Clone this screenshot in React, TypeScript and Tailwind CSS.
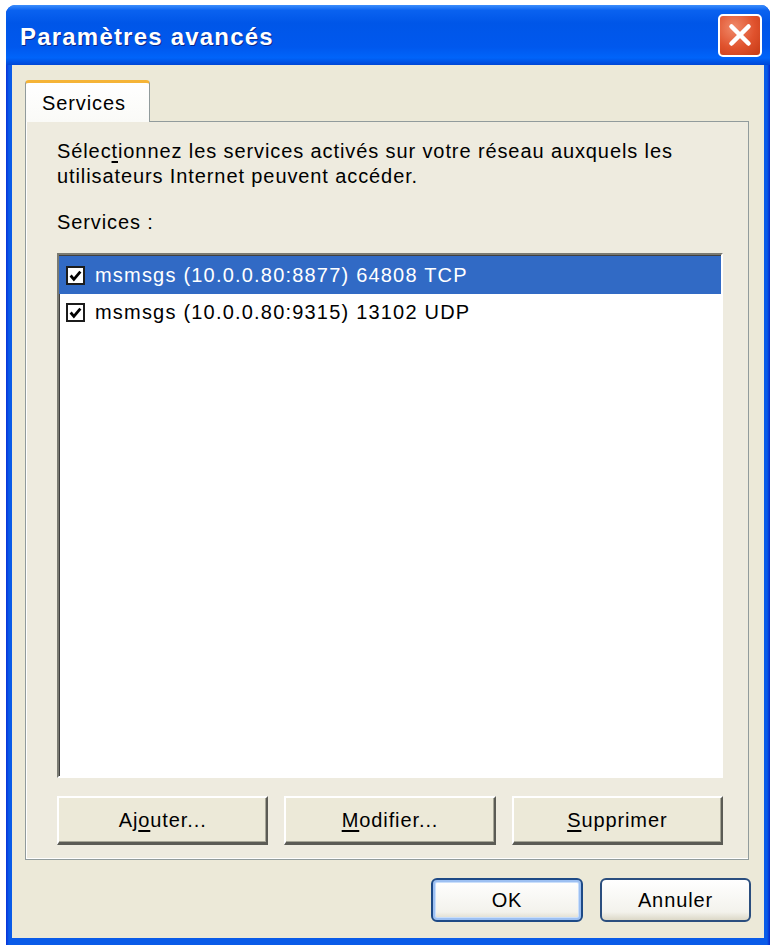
import { X } from "lucide-react"

const font = { fontFamily: '"Liberation Sans", Arial, sans-serif' }

function Check() {
  return (
    <div className="flex h-[19px] w-[19px] shrink-0 items-center justify-center border-2 border-[#1c1c1c] bg-white">
      <svg width="13" height="13" viewBox="0 0 12 12">
        <path d="M1.5 6 L4.5 9.5 L10.5 2.5" fill="none" stroke="#000" strokeWidth="2.6" />
      </svg>
    </div>
  )
}

function ClassicButton({ pre, mn, post }: { pre: string; mn: string; post: string }) {
  return (
    <button className="flex h-[49px] flex-1 items-center justify-center border-t-2 border-l-2 border-r-2 border-b-[3px] border-t-white border-l-white border-r-[#5b5b55] border-b-[#5b5b55] bg-[#ECE9D8] text-[20px] tracking-[0.9px] text-black shadow-[inset_-1px_-1px_0_#a7a697]">
      <span>
        {pre}
        <span className="underline underline-offset-[3px]">{mn}</span>
        {post}
      </span>
    </button>
  )
}

export default function App() {
  return (
    <div className="h-[951px] w-[774px] bg-white pl-[6px] pt-[5px] tracking-[0.9px]" style={font}>
      <div className="flex h-[940px] w-[764px] flex-col rounded-t-[9px] bg-[linear-gradient(to_right,#0831D9,#0A5BE8_3px,#0A5BE8_calc(100%-3px),#0327C8)]">
        {/* title bar */}
        <div className="flex h-[60px] shrink-0 items-center justify-between rounded-t-[9px] bg-[linear-gradient(to_bottom,#3C8EFC_0%,#0A62F0_9%,#0056E8_30%,#0058EE_70%,#0064FA_88%,#0047D6_100%)] pl-[14px] pr-[8px]">
          <span className="mt-[4px] text-[24px] font-bold tracking-[1.2px] text-white [text-shadow:1px_1px_0_#0B2A8C]">
            Paramètres avancés
          </span>
          <div className="flex h-[43px] w-[44px] items-center justify-center rounded-[5px] border-2 border-white bg-[radial-gradient(circle_at_35%_30%,#F08A6A,#E0522D_55%,#C53A15)]">
            <X className="h-[34px] w-[34px] text-white" strokeWidth={3.2} />
          </div>
        </div>

        {/* body */}
        <div className="mx-[6px] mb-[7px] flex flex-1 flex-col bg-[#ECE9D8] pl-[13px] pr-[13px] pt-[15px]">
          {/* tab */}
          <div className="relative z-10 -mb-px flex h-[42px] w-[125px] items-center rounded-t-[4px] border-x border-[#919B9C] border-t-[3px] border-t-[#F5B437] bg-[linear-gradient(to_bottom,#FFFFFF,#FAFAF7)] pl-[16px] text-[20px] text-black">
            Services
          </div>

          {/* tab page */}
          <div className="mr-[2px] flex h-[739px] flex-col border border-[#919B9C] bg-[#EEEBDF] pl-[31px] pr-[25px] pt-[17px] shadow-[inset_1px_-1px_0_#ffffff]">
            <p className="text-[20px] leading-[25px] text-black">
              Sélec<span className="underline underline-offset-[3px]">t</span>ionnez les services activés sur votre réseau auxquels les
              <br />
              utilisateurs Internet peuvent accéder.
            </p>
            <p className="mt-[21px] text-[20px] leading-[25px] text-black">Services :</p>

            {/* list */}
            <div className="mt-[18px] h-[525px] border-2 border-t-[#7a7a72] border-l-[#7a7a72] border-b-white border-r-white bg-white shadow-[inset_1px_1px_0_#404040]">
              <div className="mt-px flex h-[38px] items-center gap-[10px] bg-[#316AC5] pl-[7px] text-[20px] tracking-[1.2px] text-white">
                <Check />
                <span>msmsgs (10.0.0.80:8877) 64808 TCP</span>
              </div>
              <div className="flex h-[36px] items-center gap-[10px] pl-[7px] text-[20px] tracking-[1.2px] text-black">
                <Check />
                <span>msmsgs (10.0.0.80:9315) 13102 UDP</span>
              </div>
            </div>

            {/* action buttons */}
            <div className="mt-[18px] flex gap-[16px]">
              <ClassicButton pre="Aj" mn="o" post="uter..." />
              <ClassicButton pre="" mn="M" post="odifier..." />
              <ClassicButton pre="" mn="S" post="upprimer" />
            </div>
          </div>

          {/* dialog buttons */}
          <div className="mt-[18px] flex justify-end gap-[17px]">
            <button className="flex h-[44px] w-[152px] items-center justify-center rounded-[6px] border-2 border-[#1E4A86] bg-[linear-gradient(to_bottom,#FFFFFF,#F3F2EC_80%,#DCD8C8)] text-[20px] text-black shadow-[inset_0_0_0_2px_#9DC0F2,inset_0_0_0_3px_#CADFFB]">
              OK
            </button>
            <button className="flex h-[44px] w-[151px] items-center justify-center rounded-[6px] border-2 border-[#2B4E7E] bg-[linear-gradient(to_bottom,#FFFFFF,#F3F2EC_80%,#DCD8C8)] text-[20px] text-black">
              Annuler
            </button>
          </div>
        </div>
      </div>
    </div>
  )
}
